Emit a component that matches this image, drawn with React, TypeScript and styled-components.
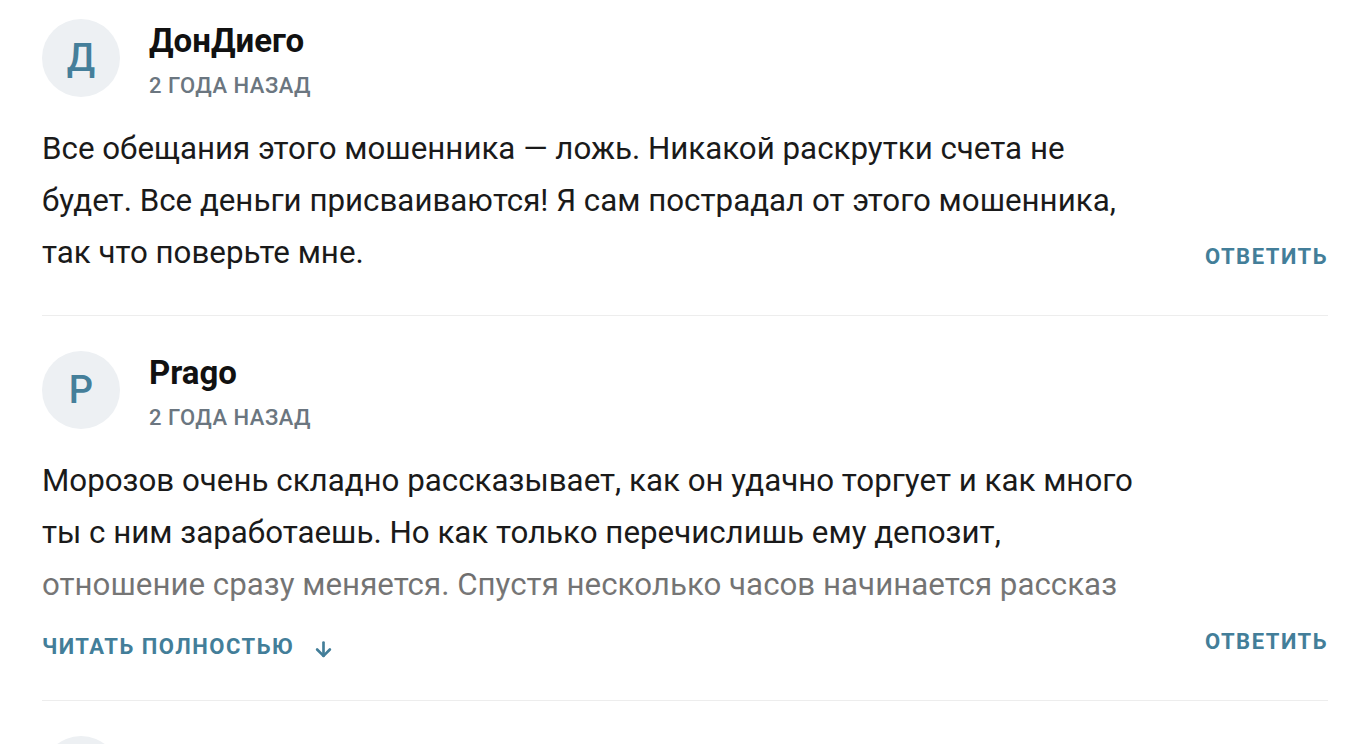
import React from 'react';
import styled, { createGlobalStyle } from 'styled-components';

const GlobalStyle = createGlobalStyle`
  body {
    margin: 0;
    background: #ffffff;
    font-family: Roboto, "Noto Sans", "Liberation Sans", sans-serif;
    color: #1a1a1a;
  }
`;

type CommentData = {
  id: number;
  author: string;
  date: string;
  text: string;
  collapsed?: boolean;
};

const comments: CommentData[] = [
  {
    id: 1,
    author: 'ДонДиего',
    date: '2 года назад',
    text: 'Все обещания этого мошенника — ложь. Никакой раскрутки счета не будет. Все деньги присваиваются! Я сам пострадал от этого мошенника, так что поверьте мне.',
  },
  {
    id: 2,
    author: 'Prago',
    date: '2 года назад',
    text: 'Морозов очень складно рассказывает, как он удачно торгует и как много ты с ним заработаешь. Но как только перечислишь ему депозит, отношение сразу меняется. Спустя несколько часов начинается рассказ про то, как рынок резко пошёл против позиции и деньги сгорели.',
    collapsed: true,
  },
  {
    id: 3,
    author: 'Мария Полякова',
    date: '2 года назад',
    text: 'Не связывайтесь с ним.',
  },
];

const ArrowDownIcon = () => (
  <svg width="17" height="17" viewBox="0 0 16 16" fill="none" stroke="currentColor" strokeWidth="2.5" strokeLinecap="round" strokeLinejoin="round">
    <path d="M8 1.5v12.5" />
    <path d="M2 8l6 6 6-6" />
  </svg>
);

const Comment = ({ comment }: { comment: CommentData }) => {
  return (
    <CommentItem>
      <Header>
        <Avatar>{comment.author.charAt(0)}</Avatar>
        <Meta>
          <Author>{comment.author}</Author>
          <DateLabel>{comment.date}</DateLabel>
        </Meta>
      </Header>
      <Body>
        <TextColumn>
          <Text $collapsed={comment.collapsed}>{comment.text}</Text>
          {comment.collapsed && (
            <ReadMore type="button">
              Читать полностью
              <ArrowDownIcon />
            </ReadMore>
          )}
        </TextColumn>
        <ReplyButton type="button">Ответить</ReplyButton>
      </Body>
    </CommentItem>
  );
};

const App = () => {
  return (
    <>
      <GlobalStyle />
      <List>
        {comments.map((item) => (
          <Comment comment={item} key={item.id} />
        ))}
      </List>
    </>
  );
};

const List = styled.div`
  padding: 19px 37px 0 42px;
  height: 744px;
  box-sizing: border-box;
  overflow: hidden;
`;

const CommentItem = styled.div`
  padding: 0 0 36px;
  & + & {
    border-top: 1px solid #ededed;
    padding-top: 35px;
  }
`;

const Header = styled.div`
  display: flex;
  align-items: flex-start;
  gap: 29px;
`;

const Avatar = styled.div`
  width: 78px;
  height: 78px;
  flex-shrink: 0;
  border-radius: 50%;
  background: #edf0f3;
  color: #457f9a;
  font-size: 38px;
  font-weight: 500;
  display: flex;
  align-items: center;
  justify-content: center;
`;

const Meta = styled.div`
  display: flex;
  flex-direction: column;
  gap: 15px;
  padding-top: 4px;
`;

const Author = styled.div`
  font-size: 33px;
  line-height: 36px;
  font-weight: 700;
  color: #111111;
`;

const DateLabel = styled.div`
  font-size: 22px;
  line-height: 24px;
  font-weight: 500;
  text-transform: uppercase;
  letter-spacing: 0.5px;
  color: #6b7680;
`;

const Body = styled.div`
  display: flex;
  justify-content: space-between;
  align-items: flex-end;
  margin-top: 25px;
`;

const TextColumn = styled.div`
  max-width: 1104px;
  flex: 1 1 auto;
  display: flex;
  flex-direction: column;
  align-items: flex-start;
`;

const Text = styled.div<{ $collapsed?: boolean }>`
  font-size: 31.3px;
  line-height: 52px;
  color: #1a1a1a;
  position: relative;
  ${({ $collapsed }) =>
    $collapsed &&
    `
    max-height: 156px;
    overflow: hidden;
    &::after {
      content: '';
      position: absolute;
      left: 0;
      right: 0;
      bottom: 0;
      height: 52px;
      background: linear-gradient(to bottom, rgba(255, 255, 255, 0.34), rgba(255, 255, 255, 0.44));
    }
  `}
`;

const LinkButton = styled.button`
  border: 0;
  background: none;
  padding: 0;
  cursor: pointer;
  font-family: inherit;
  font-size: 22px;
  line-height: 24px;
  font-weight: 700;
  text-transform: uppercase;
  letter-spacing: 1.5px;
  color: #437e99;
`;

const ReadMore = styled(LinkButton)`
  display: flex;
  align-items: center;
  gap: 21px;
  margin-top: 24px;
  padding-bottom: 5px;
  svg {
    margin-top: 4px;
  }
`;

const ReplyButton = styled(LinkButton)`
  flex-shrink: 0;
  padding-bottom: 10px;
`;

export default App;
